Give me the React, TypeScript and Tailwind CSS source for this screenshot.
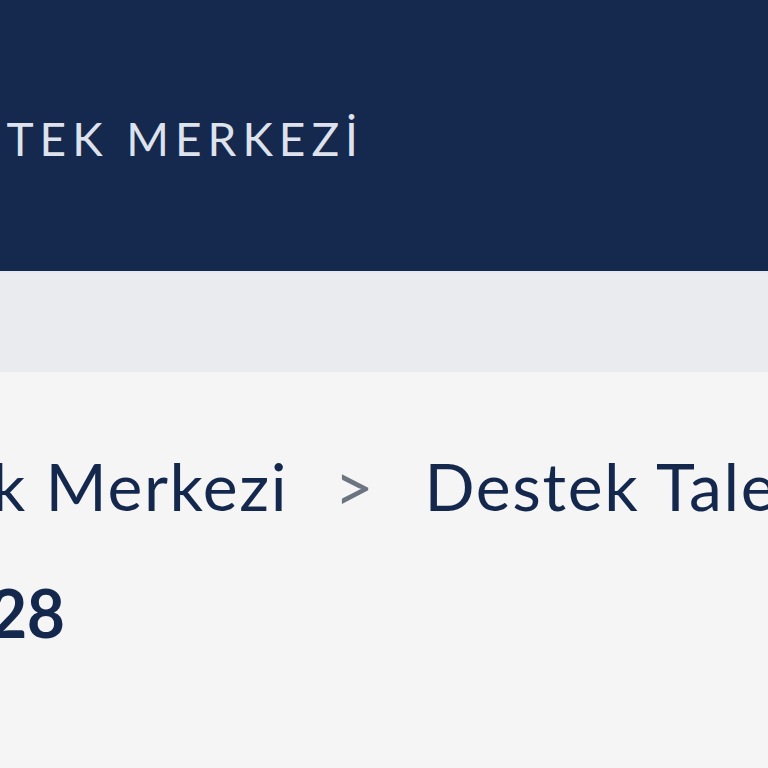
export default function App() {
  return (
    <div
      className="flex h-[768px] w-[768px] flex-col overflow-hidden bg-[#f5f5f6]"
      style={{ fontFamily: "Lato, 'Noto Sans', sans-serif" }}
    >
      <header className="flex h-[271px] shrink-0 items-center bg-[#15284d]">
        <p className="ml-[-98px] mb-[-6px] whitespace-nowrap text-[46px] font-normal tracking-[0.13em] text-[#dde2ec]">
          DESTEK MERKEZİ
        </p>
      </header>

      <div className="h-[101px] shrink-0 border-t-2 border-[#e3e8f3] bg-[#eaebef]" />

      <main className="flex flex-col">
        <nav className="ml-[-188px] mt-[80px] flex items-center whitespace-nowrap text-[66px] leading-none tracking-[0.025em] text-[#14284d]">
          <span>Destek Merkezi</span>
          <span className="ml-[46px] mr-[49px] text-[68px] text-[#6b7480]">&gt;</span>
          <span>Destek Talebi</span>
        </nav>
        <h1 className="ml-[-199px] mt-[60px] whitespace-nowrap text-[66px] font-bold leading-none tracking-[-0.01em] text-[#14284d]">
          #102528
        </h1>
      </main>
    </div>
  );
}
